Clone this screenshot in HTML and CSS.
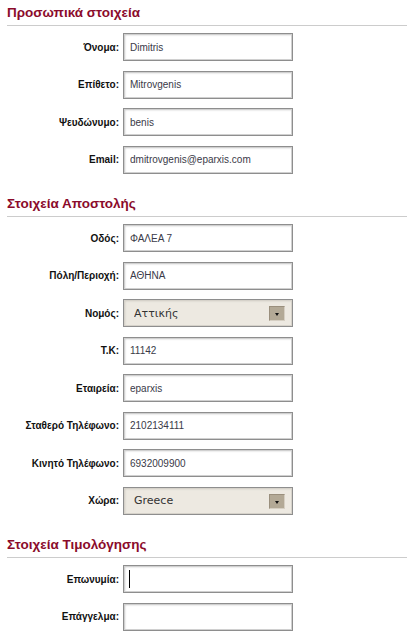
FILE: index.html
```html
<!DOCTYPE html>
<html lang="el">
<head>
<meta charset="utf-8">
<title>Στοιχεία</title>
<link rel="stylesheet" href="styles.css">
</head>
<body>
<div class="form">
  <section class="section">
    <h2>Προσωπικά στοιχεία</h2>
    <div class="fields">
      <div class="row"><label class="label">Όνομα:</label><input class="input" type="text" value="Dimitris"></div>
      <div class="row"><label class="label">Επίθετο:</label><input class="input" type="text" value="Mitrovgenis"></div>
      <div class="row"><label class="label">Ψευδώνυμο:</label><input class="input" type="text" value="benis"></div>
      <div class="row"><label class="label">Email:</label><input class="input" type="text" value="dmitrovgenis@eparxis.com"></div>
    </div>
  </section>
  <section class="section">
    <h2>Στοιχεία Αποστολής</h2>
    <div class="fields">
      <div class="row"><label class="label">Οδός:</label><input class="input" type="text" value="ΦΑΛΕΑ 7"></div>
      <div class="row"><label class="label">Πόλη/Περιοχή:</label><input class="input" type="text" value="ΑΘΗΝΑ"></div>
      <div class="row"><label class="label">Νομός:</label>
        <div class="select"><select><option>Αττικής</option></select><span class="arrow"></span></div>
      </div>
      <div class="row"><label class="label">Τ.Κ:</label><input class="input" type="text" value="11142"></div>
      <div class="row"><label class="label">Εταιρεία:</label><input class="input" type="text" value="eparxis"></div>
      <div class="row"><label class="label">Σταθερό Τηλέφωνο:</label><input class="input" type="text" value="2102134111"></div>
      <div class="row"><label class="label">Κινητό Τηλέφωνο:</label><input class="input" type="text" value="6932009900"></div>
      <div class="row"><label class="label">Χώρα:</label>
        <div class="select"><select><option>Greece</option></select><span class="arrow"></span></div>
      </div>
    </div>
  </section>
  <section class="section">
    <h2>Στοιχεία Τιμολόγησης</h2>
    <div class="fields">
      <div class="row"><label class="label">Επωνυμία:</label><div class="focused"><input class="input" type="text" value=""></div></div>
      <div class="row"><label class="label">Επάγγελμα:</label><input class="input" type="text" value=""></div>
    </div>
  </section>
</div>
</body>
</html>
```
FILE: styles.css
```css
html, body {
  margin: 0;
  padding: 0;
  background: #fff;
}
body {
  font-family: "Liberation Sans", Arial, sans-serif;
}
.form {
  padding: 4px 1px 0 7px;
}
.section + .section {
  margin-top: 21.5px;
}
h2 {
  margin: 0 0 7px;
  padding-bottom: 4px;
  font-size: 13.5px;
  line-height: 17px;
  font-weight: bold;
  color: #8b0b2b;
  border-bottom: 1px solid #cccccc;
}
.fields {
  display: flex;
  flex-direction: column;
  gap: 9.5px;
}
.row {
  display: flex;
  align-items: center;
}
.label {
  width: 112px;
  margin-right: 4px;
  text-align: right;
  font-size: 10px;
  font-weight: bold;
  color: #111;
}
.input {
  box-sizing: border-box;
  width: 170px;
  height: 28px;
  margin: 0;
  padding: 0 0 0 6px;
  border: 1px solid #8e8e8e;
  box-shadow: inset 0 0 0 1px #d0d0d0, inset 1px 1px 2px #c0c0c0;
  background: #fff;
  font-family: "Liberation Sans", Arial, sans-serif;
  font-size: 10px;
  color: #3a3a48;
  outline: none;
}
.select {
  position: relative;
  width: 170px;
  height: 28px;
}
.select select {
  -webkit-appearance: none;
  appearance: none;
  box-sizing: border-box;
  width: 100%;
  height: 100%;
  margin: 0;
  padding: 0 0 0 10px;
  border: 1px solid #8e8e8e;
  box-shadow: inset 0 0 0 1px #d6d2ca, inset 1px 1px 2px #c8c3b9;
  background: #ede9e1;
  font-family: "DejaVu Sans", sans-serif;
  font-size: 11px;
  color: #333;
  outline: none;
}
.arrow {
  position: absolute;
  right: 8px;
  top: 7px;
  box-sizing: border-box;
  width: 16px;
  height: 15px;
  background: #b3a996;
  border-top: 1px solid #9a8f7d;
  border-left: 1px solid #9a8f7d;
  border-right: 1px solid #d6cfc3;
  border-bottom: 1px solid #d6cfc3;
  pointer-events: none;
}
.arrow::after {
  content: "";
  position: absolute;
  left: 5px;
  top: 6px;
  border-left: 2.5px solid transparent;
  border-right: 2.5px solid transparent;
  border-top: 3px solid #111;
}
.focused {
  position: relative;
  display: flex;
}
.focused::after {
  content: "";
  position: absolute;
  left: 6px;
  top: 5px;
  width: 1px;
  height: 18px;
  background: #000;
}
```
